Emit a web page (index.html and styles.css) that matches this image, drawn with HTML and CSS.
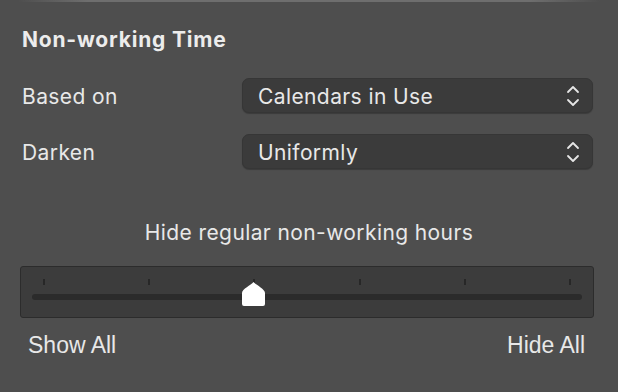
FILE: index.html
```html
<!DOCTYPE html>
<html>
<head>
<meta charset="utf-8">
<link rel="stylesheet" href="styles.css">
</head>
<body>
<div class="topline"></div>
<div class="panel">
  <h1 class="title">Non-working Time</h1>
  <div class="form">
    <div class="label">Based on</div>
    <div class="popup"><span>Calendars in Use</span>
      <svg class="chev" width="14" height="22" viewBox="0 0 14 22"><path d="M2 7 L7 2 L12 7 M2 15 L7 20 L12 15" fill="none" stroke="#e6e6e6" stroke-width="1.8" stroke-linecap="round" stroke-linejoin="round"/></svg>
    </div>
    <div class="label">Darken</div>
    <div class="popup"><span>Uniformly</span>
      <svg class="chev" width="14" height="22" viewBox="0 0 14 22"><path d="M2 7 L7 2 L12 7 M2 15 L7 20 L12 15" fill="none" stroke="#e6e6e6" stroke-width="1.8" stroke-linecap="round" stroke-linejoin="round"/></svg>
    </div>
  </div>
  <div class="caption">Hide regular non-working hours</div>
  <div class="slider">
    <div class="ticks">
      <i></i><i></i><i></i><i></i><i></i><i></i>
    </div>
    <div class="track">
      <svg class="knob" style="left:210px" width="23" height="24" viewBox="0 0 23 24"><path d="M11.5 0 C14 3 23 7 23 11 V22 Q23 24 21 24 H2 Q0 24 0 22 V11 C0 7 9 3 11.5 0 Z" fill="#ffffff"/></svg>
    </div>
  </div>
  <div class="ends">
    <span>Show All</span>
    <span>Hide All</span>
  </div>
</div>
</body>
</html>
```
FILE: styles.css
```css
html, body {
  margin: 0;
  padding: 0;
}
body {
  width: 618px;
  height: 392px;
  background: #4e4e4e;
  color: #e8e8e8;
  font-family: "Inter", "Noto Sans", sans-serif;
  overflow: hidden;
}
.topline {
  height: 2px;
  margin: 0 18px;
  background: linear-gradient(to right, rgba(120,120,120,0), #6e6e6e 12%, #6e6e6e 88%, rgba(120,120,120,0));
}
.panel {
  padding: 0 24px 0 22px;
}
.title {
  margin: 0;
  padding-top: 26px;
  font-size: 21px;
  font-weight: 700;
  letter-spacing: 0.8px;
  line-height: 24px;
  color: #ececec;
}
.form {
  display: grid;
  grid-template-columns: 220px 351px;
  row-gap: 21px;
  margin-top: 26px;
  align-items: center;
}
.label {
  font-size: 21px;
  letter-spacing: 0.4px;
  padding-top: 1px;
}
.popup {
  height: 35px;
  box-sizing: border-box;
  border: 1px solid #363636;
  border-radius: 7px;
  background: #3b3b3b;
  box-shadow: 0 1px 1px rgba(0,0,0,0.25);
  display: flex;
  align-items: center;
  justify-content: space-between;
  padding: 1px 12px 0 15px;
  font-size: 21px;
  letter-spacing: 0.4px;
}
.chev {
  display: block;
  margin-top: -1px;
}
.caption {
  text-align: center;
  margin-top: 52px;
  font-size: 21px;
  letter-spacing: 0.4px;
  line-height: 24px;
  padding-left: 2px;
}
.slider {
  margin: 21px 0 0 -2px;
  height: 52px;
  box-sizing: border-box;
  border: 1px solid #2c2c2c;
  border-radius: 3px;
  background: #3c3c3c;
  padding: 12px 11px 0 11px;
}
.ticks {
  display: flex;
  justify-content: space-between;
  padding: 0 11px;
  height: 6px;
}
.ticks i {
  display: block;
  width: 2px;
  height: 6px;
  background: #272727;
}
.track {
  position: relative;
  margin-top: 9px;
  height: 6px;
  border-radius: 3px;
  background: #2b2b2b;
}
.knob {
  position: absolute;
  top: -12px;
}
.ends {
  display: flex;
  justify-content: space-between;
  margin-top: 14px;
  padding: 0 9px 0 6px;
  font-family: "Liberation Sans", Arial, sans-serif;
  font-size: 23px;
  line-height: 26px;
}
```
